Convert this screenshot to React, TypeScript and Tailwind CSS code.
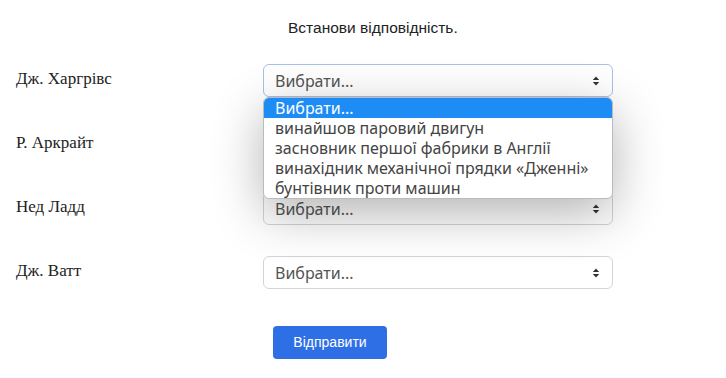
import React from 'react';

const rows = ['Дж. Харгрівс', 'Р. Аркрайт', 'Нед Ладд', 'Дж. Ватт'];

const options = [
  'винайшов паровий двигун',
  'засновник першої фабрики в Англії',
  'винахідник механічної прядки «Дженні»',
  'бунтівник проти машин',
];

function Arrows() {
  return (
    <svg width="8" height="10" viewBox="0 0 8 10" className="text-[#333]">
      <path d="M4 0.5 L7.2 4 H0.8 Z" fill="currentColor" />
      <path d="M4 9.5 L7.2 6 H0.8 Z" fill="currentColor" />
    </svg>
  );
}

function FakeSelect({ focused }: { focused?: boolean }) {
  return (
    <div
      className={`flex items-center justify-between h-[33px] w-[350px] rounded-md border bg-white pl-[11px] pr-[12px] ${
        focused ? 'border-[#a9c0e8]' : 'border-[#d4d4d4]'
      }`}
    >
      <span className="text-[16px] text-[#555] font-['Noto_Sans',sans-serif]">Вибрати...</span>
      <Arrows />
    </div>
  );
}

export default function App() {
  return (
    <div className="w-[726px] h-[378px] bg-white relative overflow-hidden">
      <div className="pt-[18px] pl-[288px] text-[15.5px] text-[#222] font-['Liberation_Sans',sans-serif] leading-[20px]">
        Встанови відповідність.
      </div>

      <div className="mt-[26px] flex flex-col gap-[31px] pl-[16px]">
        {rows.map((name, i) => (
          <div key={name} className="flex items-center">
            <div className="w-[247px] text-[17px] text-[#222] font-['Liberation_Serif',serif] -mt-[4px]">
              {name}
            </div>
            <FakeSelect focused={i === 0} />
          </div>
        ))}
      </div>

      <div className="mt-[37px] pl-[273px]">
        <button className="w-[114px] h-[33px] rounded-[4px] bg-[#2f6fe6] text-white text-[14px] font-['Liberation_Sans',sans-serif]">
          Відправити
        </button>
      </div>

      {/* open option list of the first select */}
      <div className="absolute left-[263px] top-[97px] w-[350px] rounded-md border border-[#bbb] bg-white overflow-hidden shadow-[0_14px_50px_rgba(0,0,0,0.3)] font-['Noto_Sans',sans-serif] text-[16px] leading-[20px]">
        <div className="bg-[#1e8cf5] text-white pl-[11px]">Вибрати...</div>
        {options.map((o) => (
          <div key={o} className="pl-[11px] text-[#444]">
            {o}
          </div>
        ))}
      </div>
    </div>
  );
}
